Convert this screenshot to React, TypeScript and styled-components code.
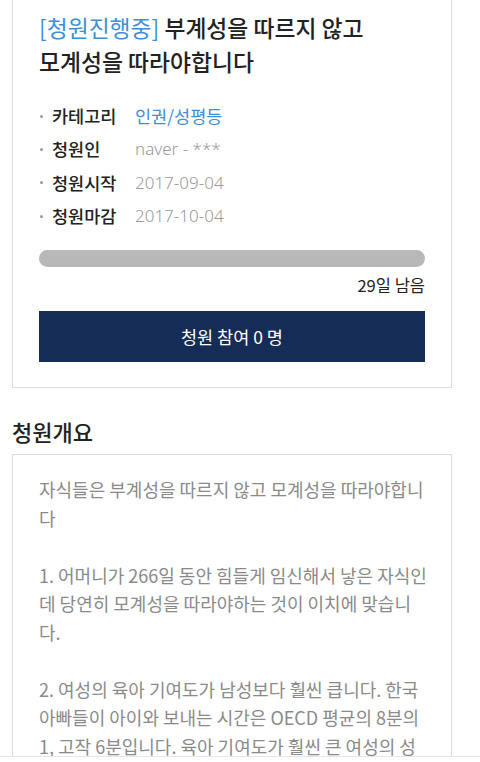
import React from 'react';
import styled, { createGlobalStyle } from 'styled-components';

const GlobalStyle = createGlobalStyle`
    html, body {
        margin: 0;
        padding: 0;
        background: #fff;
        font-family: 'Noto Sans CJK KR', 'Noto Sans', sans-serif;
        color: #222;
    }
`;

const Page = styled.div`
    width: 440px;
    padding: 0 0 40px 12px;
`;

const Card = styled.div`
    border: 1px solid #dcdcdc;
    border-top: none;
    padding: 11px 26px 25px 26px;
`;

const Title = styled.h1`
    margin: 0;
    font-size: 22.8px;
    line-height: 34px;
    font-weight: 500;
    color: #222;
`;

const Status = styled.span`
    color: #3d8fd9;
    font-weight: 400;
`;

const InfoList = styled.ul`
    list-style: none;
    margin: 20px 0 0 0;
    padding: 0;
`;

const InfoRow = styled.li`
    display: flex;
    align-items: center;
    height: 33.3px;
    font-size: 17.5px;
    position: relative;
    padding-left: 13px;

    &::before {
        content: '';
        position: absolute;
        left: 1px;
        top: 50%;
        width: 3px;
        height: 3px;
        margin-top: -1px;
        border-radius: 50%;
        background: #999;
    }
`;

const Label = styled.span`
    width: 83px;
    font-weight: 500;
    color: #222;
`;

const Value = styled.span<{ $accent?: boolean }>`
    color: ${p => (p.$accent ? '#3d8fd9' : '#9a9a9a')};
    font-family: ${p => (p.$accent ? "'Noto Sans CJK KR', sans-serif" : "'Noto Sans', 'Noto Sans CJK KR', sans-serif")};
    font-size: ${p => (p.$accent ? '17.5px' : '17px')};
    font-weight: ${p => (p.$accent ? 400 : 300)};
`;

const Progress = styled.div`
    margin-top: 18px;
    height: 17px;
    border-radius: 9px;
    background: #b8b8b8;
`;

const Remaining = styled.div`
    margin-top: 7px;
    text-align: right;
    font-size: 16.5px;
    line-height: 22px;
    color: #222;
`;

const JoinButton = styled.button`
    display: block;
    width: 100%;
    margin-top: 15px;
    height: 51px;
    border: none;
    background: #152c56;
    color: #fff;
    font-family: 'Noto Sans CJK KR', sans-serif;
    font-size: 17.5px;
`;

const Heading = styled.h2`
    margin: 28px 0 8px 0;
    font-size: 22px;
    line-height: 30px;
    font-weight: 500;
    color: #222;
`;

const Body = styled.div`
    border: 1px solid #dcdcdc;
    padding: 20px 22px 20px 26px;
`;

const Paragraph = styled.p`
    margin: 0 0 28.5px 0;
    font-size: 18px;
    line-height: 28.5px;
    color: #8a8a8a;
    word-break: break-all;
`;

const BottomBar = styled.div`
    position: fixed;
    left: 0;
    right: 0;
    bottom: 0;
    height: 5px;
    background: #fff;
    border-top: 1px solid #e6e6e6;
`;

const info = [
    { label: '카테고리', value: '인권/성평등', accent: true },
    { label: '청원인', value: 'naver - ***' },
    { label: '청원시작', value: '2017-09-04' },
    { label: '청원마감', value: '2017-10-04' },
];

const paragraphs = [
    '자식들은 부계성을 따르지 않고 모계성을 따라야합니다',
    '1. 어머니가 266일 동안 힘들게 임신해서 낳은 자식인데 당연히 모계성을 따라야하는 것이 이치에 맞습니다.',
    '2. 여성의 육아 기여도가 남성보다 훨씬 큽니다. 한국 아빠들이 아이와 보내는 시간은 OECD 평균의 8분의 1, 고작 6분입니다. 육아 기여도가 훨씬 큰 여성의 성을 따르는 것이 당연합니다.',
];

export default function App() {
    return (
        <>
            <GlobalStyle />
            <Page>
                <Card>
                    <Title>
                        <Status>[청원진행중]</Status> 부계성을 따르지 않고
                        <br />
                        모계성을 따라야합니다
                    </Title>
                    <InfoList>
                        {info.map((item, i) => (
                            <InfoRow key={i}>
                                <Label>{item.label}</Label>
                                <Value $accent={item.accent}>{item.value}</Value>
                            </InfoRow>
                        ))}
                    </InfoList>
                    <Progress />
                    <Remaining>29일 남음</Remaining>
                    <JoinButton>청원 참여 0 명</JoinButton>
                </Card>
                <Heading>청원개요</Heading>
                <Body>
                    {paragraphs.map((text, i) => (
                        <Paragraph key={i}>{text}</Paragraph>
                    ))}
                </Body>
            </Page>
            <BottomBar />
        </>
    );
}
